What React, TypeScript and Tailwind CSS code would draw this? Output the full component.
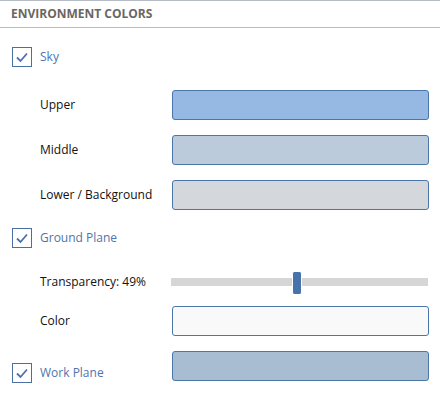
import { useState } from "react";

function Check({ label }: { label: string }) {
  return (
    <div className="flex items-center gap-2">
      <div className="w-5 h-5 border border-[#4a6fa5] flex items-center justify-center bg-white">
        <svg width="14" height="14" viewBox="0 0 14 14" fill="none">
          <path d="M2 7.5 L5.5 11 L12 3.5" stroke="#4a72aa" strokeWidth="1.8" />
        </svg>
      </div>
      <span className="text-[#4f74ad]">{label}</span>
    </div>
  );
}

function Swatch({ color }: { color: string }) {
  return (
    <div
      className="w-[257px] h-[30px] border border-[#4a76aa] rounded-[3px]"
      style={{ backgroundColor: color }}
    />
  );
}

export default function App() {
  const [transparency] = useState(49);
  const thumbLeft = Math.round(((257 - 10) * transparency) / 100);

  return (
    <div className="w-[440px] h-[406px] bg-white text-[12px] text-[#111] font-['Open_Sans',sans-serif]">
      <div className="h-[28px] border-y border-[#b5bcc6] flex items-center pl-[11px]">
        <span className="font-bold text-[12px] text-[#6b6661]">ENVIRONMENT COLORS</span>
      </div>

      <div className="mt-[19px] pl-[12px] h-5 flex items-center">
        <Check label="Sky" />
      </div>

      <div className="mt-[23px] flex items-center">
        <div className="w-[172px] pl-[40px]">Upper</div>
        <Swatch color="#95b9e3" />
      </div>
      <div className="mt-[15px] flex items-center">
        <div className="w-[172px] pl-[40px]">Middle</div>
        <Swatch color="#bccbdb" />
      </div>
      <div className="mt-[15px] flex items-center">
        <div className="w-[172px] pl-[40px]">Lower / Background</div>
        <Swatch color="#d4d8dc" />
      </div>

      <div className="mt-[18px] pl-[12px] h-5 flex items-center">
        <Check label="Ground Plane" />
      </div>

      <div className="mt-[23px] flex items-center h-[22px]">
        <div className="w-[171px] pl-[40px]">Transparency: {transparency}%</div>
        <div className="relative w-[257px] h-[8px] bg-[#d6d6d6]">
          <div
            className="absolute top-[-6px] w-[10px] h-[22px] bg-[#4674aa] border-x border-white rounded-[2px]"
            style={{ left: thumbLeft }}
          />
        </div>
      </div>

      <div className="mt-[13px] flex items-center">
        <div className="w-[172px] pl-[40px]">Color</div>
        <Swatch color="#f9f9f9" />
      </div>

      <div className="mt-[15px] flex items-start">
        <div className="w-[172px] pl-[12px] pt-[12px]">
          <Check label="Work Plane" />
        </div>
        <Swatch color="#a8bdd2" />
      </div>
    </div>
  );
}
